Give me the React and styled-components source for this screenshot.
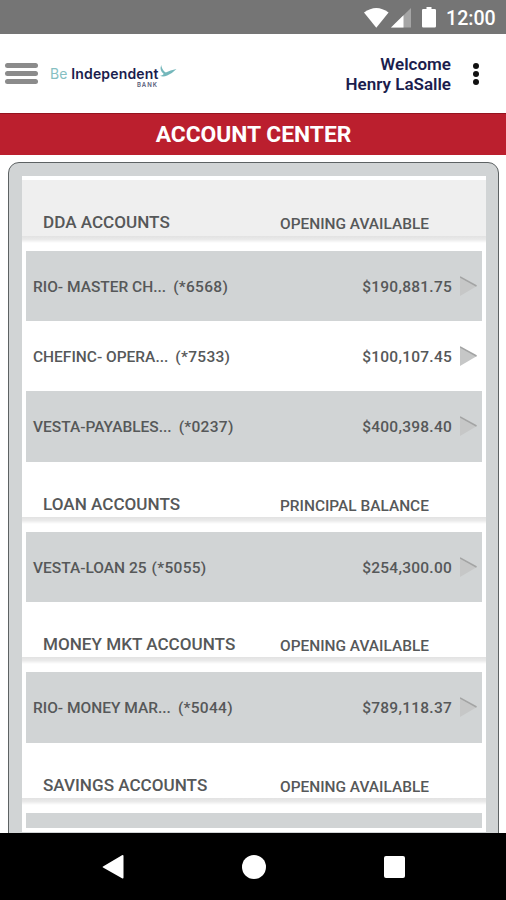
import React from "react";
import styled, { createGlobalStyle } from "styled-components";

const colors = {
  status: "#757575",
  red: "#bb1f2e",
  panel: "#d1d4d5",
  text: "#565859",
  navy: "#1b1d4d",
  teal: "#86bfc2",
};

const sections = [
  {
    title: "DDA ACCOUNTS",
    balance: "OPENING AVAILABLE",
    rows: [
      { name: "RIO- MASTER CH...", number: "(*6568)", amount: "$190,881.75" },
      { name: "CHEFINC- OPERA...", number: "(*7533)", amount: "$100,107.45" },
      { name: "VESTA-PAYABLES...", number: "(*0237)", amount: "$400,398.40" },
    ],
  },
  {
    title: "LOAN ACCOUNTS",
    balance: "PRINCIPAL BALANCE",
    rows: [{ name: "VESTA-LOAN 25", number: "(*5055)", amount: "$254,300.00", tight: true }],
  },
  {
    title: "MONEY MKT ACCOUNTS",
    balance: "OPENING AVAILABLE",
    rows: [{ name: "RIO- MONEY MAR...", number: "(*5044)", amount: "$789,118.37" }],
  },
  {
    title: "SAVINGS ACCOUNTS",
    balance: "OPENING AVAILABLE",
    rows: [],
  },
];

function StatusIcons() {
  return (
    <svg width="76" height="22" viewBox="0 0 76 22">
      <path d="M0 5.6 Q12.3 -3.6 24.6 5.6 L12.3 20.8 Z" fill="#fff" />
      <path d="M47 1 V20.5 H27 Z" fill="#a5a5a5" />
      <path d="M39.5 8.3 V20.5 H27 Z" fill="#fff" />
      <path d="M62.5 0 h5 v2 h3.2 q1.3 0 1.3 1.3 v15.9 q0 1.3 -1.3 1.3 h-11.4 q-1.3 0 -1.3 -1.3 v-15.9 q0 -1.3 1.3 -1.3 h3.2 z" fill="#fff" />
    </svg>
  );
}

function Arrow() {
  return (
    <svg width="18" height="21" viewBox="0 0 18 21">
      <path d="M0 0.5 L17 10 L0 20 Z" fill="#c6c7c7" />
      <path d="M0 1 L16.5 10" stroke="#a3a4a4" strokeWidth="1.5" fill="none" />
    </svg>
  );
}

export default function App() {
  return (
    <Screen>
      <GlobalStyle />
      <StatusBar>
        <StatusIcons />
        <Clock>12:00</Clock>
      </StatusBar>
      <Header>
        <Menu>
          <MenuLine />
          <MenuLine />
          <MenuLine />
        </Menu>
        <Logo>
          <div>
            <LogoName>
              <LogoBe>Be</LogoBe> Independent
            </LogoName>
            <LogoBank>BANK</LogoBank>
          </div>
          <svg width="18" height="14" viewBox="0 0 18 14">
            <path d="M2.2 0 Q2.8 5 6.8 7.6 Q11 5.2 17.5 4 Q13 8.6 8.2 10.6 Q4 12.2 1 10.8 Q4.4 10.4 4.6 8.8 Q0.2 5.5 2.2 0 Z" fill="#74b7bb" />
          </svg>
        </Logo>
        <Welcome>
          Welcome
          <br />
          Henry LaSalle
        </Welcome>
        <Dots>
          <Dot />
          <Dot />
          <Dot />
        </Dots>
      </Header>
      <Title>ACCOUNT CENTER</Title>
      <Content>
        <Panel>
          <List>
            {sections.map((section, i) => (
              <React.Fragment key={section.title}>
                <SectionHeader $first={i === 0}>
                  <SectionTitle>{section.title}</SectionTitle>
                  <BalanceTitle>{section.balance}</BalanceTitle>
                </SectionHeader>
                <Shadow />
                {section.rows.map((row, j) => (
                  <Row key={row.number} $shaded={j % 2 === 0}>
                    <Name>{row.name}</Name>
                    <Number $tight={row.tight}>{row.number}</Number>
                    <Amount>{row.amount}</Amount>
                    <Arrow />
                  </Row>
                ))}
              </React.Fragment>
            ))}
            <CutRow $shaded />
          </List>
        </Panel>
      </Content>
      <NavBar>
        <svg width="22" height="26" viewBox="0 0 22 26">
          <path d="M1 12.5 L20 1.2 Q21.5 0.5 21.5 2 V23.5 Q21.5 25 20 24.2 L1 13.5 Q0 13 1 12.5 Z" fill="#fff" />
        </svg>
        <Home />
        <Recent />
      </NavBar>
    </Screen>
  );
}

const GlobalStyle = createGlobalStyle`
  * {
    box-sizing: border-box;
  }
  body {
    margin: 0;
    font-family: Roboto, sans-serif;
    background-color: #fff;
  }
`;
const Screen = styled.div`
  width: 506px;
  height: 900px;
  display: flex;
  flex-direction: column;
  overflow: hidden;
`;
const StatusBar = styled.div`
  height: 34px;
  flex-shrink: 0;
  display: flex;
  align-items: center;
  justify-content: flex-end;
  padding: 1px 10px 0 0;
  background-color: ${colors.status};
`;
const Clock = styled.span`
  margin-left: 6px;
  padding-top: 1px;
  width: 50px;
  font-size: 19.6px;
  font-weight: 500;
  white-space: nowrap;
  color: #fff;
`;
const Header = styled.div`
  height: 79px;
  flex-shrink: 0;
  display: flex;
  align-items: center;
  padding-left: 5px;
`;
const Menu = styled.div`
  display: flex;
  flex-direction: column;
  gap: 3px;
`;
const MenuLine = styled.div`
  width: 33px;
  height: 5px;
  border-radius: 3px;
  background-color: #8b8b8b;
`;
const Logo = styled.div`
  display: flex;
  margin: 6px 0 0 12px;
`;
const LogoName = styled.div`
  width: 109px;
  font-family: Inter, sans-serif;
  font-size: 14px;
  line-height: 18px;
  font-weight: 600;
  letter-spacing: 0.15px;
  white-space: nowrap;
  color: ${colors.navy};
`;
const LogoBe = styled.span`
  font-weight: 400;
  color: ${colors.teal};
`;
const LogoBank = styled.div`
  margin-top: -1px;
  padding-right: 1px;
  font-family: Inter, sans-serif;
  font-size: 6px;
  line-height: 6px;
  font-weight: 600;
  letter-spacing: 1px;
  text-align: right;
  color: #555a78;
`;
const Welcome = styled.div`
  margin-left: auto;
  font-size: 17px;
  line-height: 20px;
  font-weight: 600;
  text-align: right;
  color: ${colors.navy};
`;
const Dots = styled.div`
  display: flex;
  flex-direction: column;
  gap: 2px;
  margin: 0 27px 0 22px;
`;
const Dot = styled.div`
  width: 6px;
  height: 6px;
  border-radius: 50%;
  background-color: #111;
`;
const Title = styled.div`
  height: 42px;
  flex-shrink: 0;
  padding-left: 1px;
  border-top: 1px solid #94131f;
  font-size: 22.8px;
  line-height: 42px;
  font-weight: 700;
  text-align: center;
  color: #fff;
  background-color: ${colors.red};
`;
const Content = styled.div`
  height: 678px;
  flex-shrink: 0;
  padding: 7px 7px 0 8px;
  overflow: hidden;
`;
const Panel = styled.div`
  height: 700px;
  padding: 13px 12px 0 13px;
  border: 1px solid #5d6263;
  border-radius: 11px;
  background-color: ${colors.panel};
`;
const List = styled.div`
  height: 656px;
  padding-top: 4px;
  overflow: hidden;
  background-color: #fff;
`;
const SectionHeader = styled.div`
  display: flex;
  height: ${(props) => (props.$first ? 56 : 55.3)}px;
  padding: 32px 0 0 21px;
  line-height: 20px;
  color: ${colors.text};
  background-color: ${(props) => (props.$first ? "#efefef" : "#fff")};
`;
const Shadow = styled.div`
  height: 7px;
  margin-bottom: 8px;
  background: linear-gradient(#e2e2e2, #eaeaea 50%, #fff);
`;
const SectionTitle = styled.div`
  width: 237px;
  font-size: 17.1px;
  font-weight: 500;
`;
const BalanceTitle = styled.div`
  padding-top: 2px;
  font-size: 15.45px;
  font-weight: 500;
`;
const Row = styled.div`
  display: flex;
  align-items: center;
  height: 70.2px;
  margin: 0 4px;
  padding: 1px 4px 0 7px;
  font-size: 15.5px;
  line-height: 20px;
  font-weight: 500;
  color: ${colors.text};
  background-color: ${(props) => (props.$shaded ? colors.panel : "#fff")};
`;
const CutRow = styled(Row)`
  height: 15px;
`;
const Name = styled.span`
  padding-top: 1px;
  white-space: nowrap;
`;
const Number = styled.span`
  margin-left: ${(props) => (props.$tight ? 5 : 7)}px;
  padding-top: 1px;
  letter-spacing: 0.3px;
`;
const Amount = styled.span`
  margin: 0 8px 0 auto;
  padding-top: 1px;
  letter-spacing: 0.25px;
`;
const NavBar = styled.div`
  height: 67px;
  flex-shrink: 0;
  display: flex;
  align-items: center;
  justify-content: space-between;
  padding: 0 101px 0 102px;
  background-color: #000;
`;
const Home = styled.div`
  width: 24px;
  height: 24px;
  border-radius: 50%;
  background-color: #fff;
`;
const Recent = styled.div`
  width: 21px;
  height: 22px;
  border-radius: 2px;
  background-color: #fff;
`;
